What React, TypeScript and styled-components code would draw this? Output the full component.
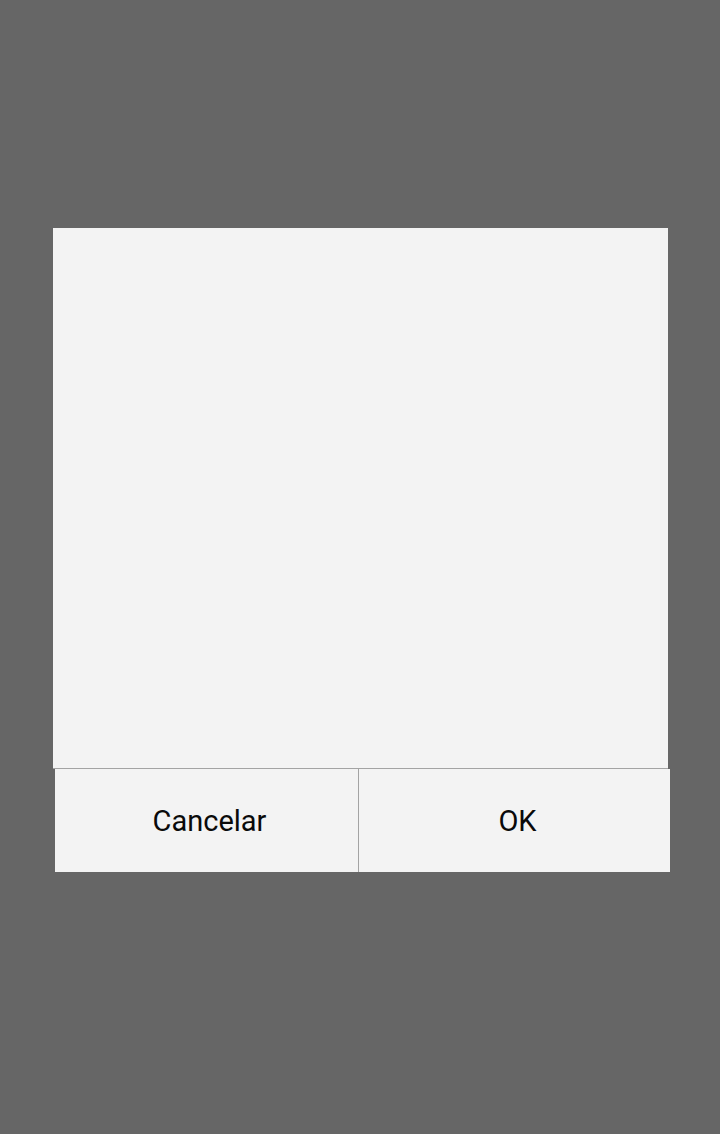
import React from "react";
import styled, { createGlobalStyle } from "styled-components";

const GlobalStyle = createGlobalStyle`
  html, body {
    margin: 0;
    padding: 0;
    background: #666666;
  }
  #root {
    min-height: 100vh;
  }
`;

const Overlay = styled.div`
  min-height: 1134px;
  background: #666666;
  padding: 228px 0 0 53px;
  box-sizing: border-box;
  font-family: Roboto, "Noto Sans", sans-serif;
`;

const Dialog = styled.div`
  display: flex;
  flex-direction: column;
  width: 617px;
`;

const Content = styled.div`
  width: 615px;
  height: 540px;
  background: #f3f3f3;
  border-bottom: 1px solid #a3a3a3;
`;

const Footer = styled.div`
  display: grid;
  grid-template-columns: 303px 1fr;
  width: 615px;
  height: 103px;
  margin-left: 2px;
  background: #f3f3f3;
`;

const ActionButton = styled.button<{ divider?: boolean }>`
  display: flex;
  align-items: center;
  justify-content: center;
  padding: 1px 0 0 6px;
  margin: 0;
  border: none;
  border-left: ${(p) => (p.divider ? "1px solid #a3a3a3" : "none")};
  background: transparent;
  font-family: Roboto, "Noto Sans", sans-serif;
  font-size: 29px;
  color: #0a0a0a;
  cursor: pointer;
`;

const App: React.FC = () => {
  return (
    <>
      <GlobalStyle />
      <Overlay>
        <Dialog>
          <Content />
          <Footer>
            <ActionButton>Cancelar</ActionButton>
            <ActionButton divider>OK</ActionButton>
          </Footer>
        </Dialog>
      </Overlay>
    </>
  );
};

export default App;
